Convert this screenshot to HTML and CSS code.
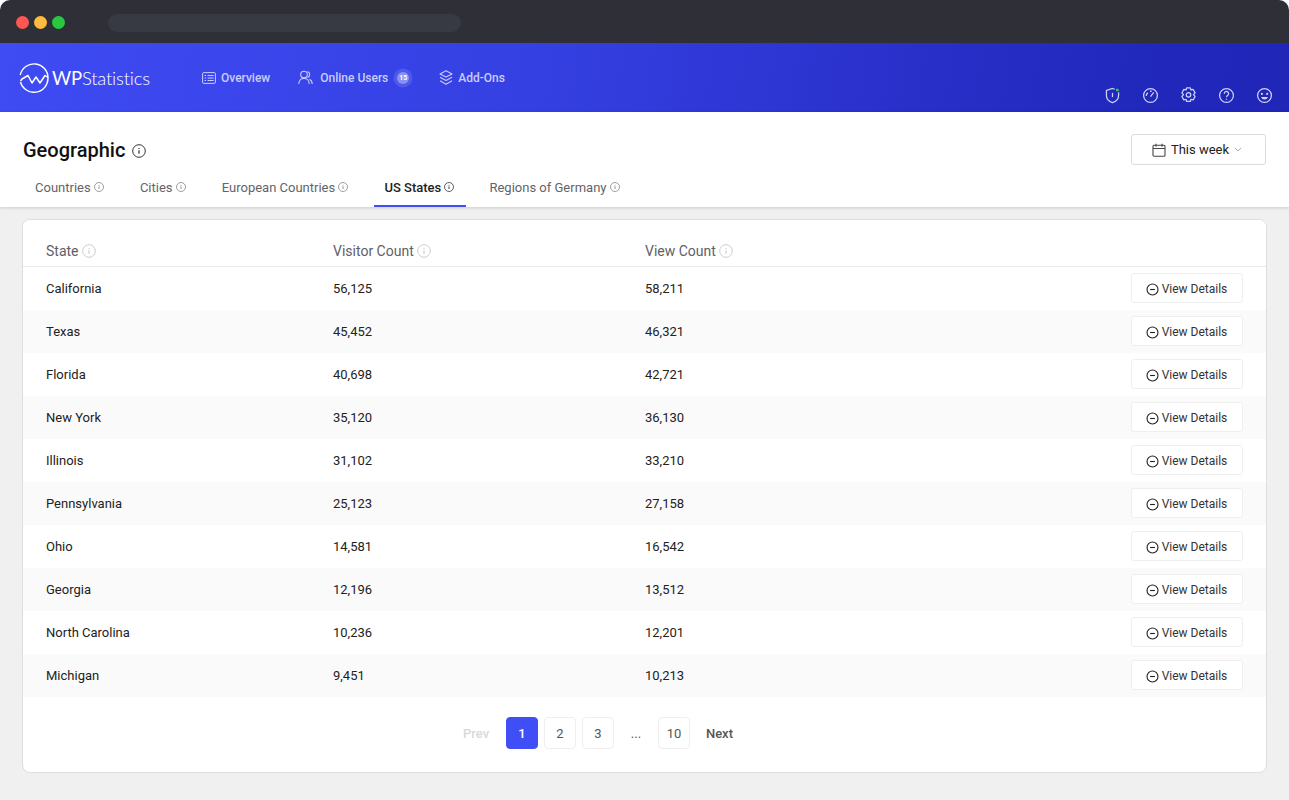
FILE: index.html
```html
<!DOCTYPE html>
<html lang="en">
<head>
<meta charset="utf-8">
<title>WP Statistics - Geographic</title>
<link rel="stylesheet" href="styles.css">
</head>
<body>
<svg class="defs" width="0" height="0" aria-hidden="true">
  <symbol id="info" viewBox="0 0 14 14"><circle cx="7" cy="7" r="6.300" fill="none" stroke="currentColor" stroke-width="1"/><path d="M7 6.200v3.600M7 4v1.100" fill="none" stroke="currentColor" stroke-width="1.200"/></symbol>
  <symbol id="minus" viewBox="0 0 14 14"><circle cx="7" cy="7" r="5.900" fill="none" stroke="currentColor" stroke-width="1.200"/><path d="M4.400 7h5.200" fill="none" stroke="currentColor" stroke-width="1.200"/></symbol>
</svg>
<div class="window">
  <div class="chrome">
    <span class="dot red"></span><span class="dot yellow"></span><span class="dot green"></span>
    <span class="url"></span>
  </div>
  <header class="topbar">
    <div class="logo">
      <svg class="logo-mark" viewBox="0 0 30 30" width="30" height="30"><path d="M1.300 12A14 14 0 0 1 29 15A14 14 0 0 1 1.500 19" fill="none" stroke="#fff" stroke-width="1.400"/><path d="M1.500 18L3 16l6-3.500 4 7.500 4-6 4 6 5-7.500 3 2" fill="none" stroke="#fff" stroke-width="1.500" stroke-linejoin="round"/></svg>
      <span class="logo-text">WP<span class="logo-light">Statistics</span></span>
    </div>
    <nav class="nav">
      <a class="nav-item"><svg viewBox="0 0 14 12" width="14" height="12"><rect x=".6" y=".6" width="12.800" height="10.800" rx="1" fill="none" stroke="currentColor"/><path d="M2.600 3.500h1.500M2.600 6h1.500M2.600 8.500h1.500M5.600 3.500h6M5.600 6h6M5.600 8.500h6" stroke="currentColor" fill="none"/></svg>Overview</a>
      <a class="nav-item"><svg viewBox="0 0 15 15" width="15" height="15"><circle cx="6" cy="4.500" r="3.300" fill="none" stroke="currentColor" stroke-width="1.100"/><path d="M.8 14c0-3.300 2.200-5.600 5.200-5.600S11.200 10.700 11.200 14M9.500 1.400a3.300 3.300 0 0 1 0 6.200M11.500 9.200c1.700.9 2.700 2.700 2.700 4.800" fill="none" stroke="currentColor" stroke-width="1.100"/></svg>Online Users<span class="badge">15</span></a>
      <a class="nav-item"><svg viewBox="0 0 14 15" width="14" height="15"><path d="M7 .8l6 3.100-6 3.100-6-3.100zM1 7.300l6 3.100 6-3.100M1 10.700l6 3.500 6-3.500" fill="none" stroke="currentColor" stroke-width="1.100" stroke-linejoin="round"/></svg>Add-Ons</a>
    </nav>
    <div class="tools">
      <svg viewBox="0 0 16 16" width="17" height="17"><path d="M8 1.400l5.700 1.800v5c0 3.200-2.400 5.500-5.700 6.600-3.300-1.100-5.700-3.400-5.700-6.600v-5z" fill="none" stroke="currentColor" stroke-width="1.200"/><path d="M8 5.500v4" stroke="currentColor" stroke-width="1.200"/><circle cx="12.500" cy="2.800" r="2" fill="#2bc84a" stroke="#2127bb"/></svg>
      <svg viewBox="0 0 16 16" width="17" height="17"><circle cx="8" cy="8" r="6.500" fill="none" stroke="currentColor" stroke-width="1.200"/><path d="M8 9l3-4M4 8.500a4 4 0 0 1 1.500-3M7.500 4h1.500" fill="none" stroke="currentColor" stroke-width="1.200"/></svg>
      <svg viewBox="0 0 16 16" width="17" height="17"><path d="M6.300 .8h3.400l.6 2 2.100-.5 1.800 3.200-1.500 1.700 1.500 1.700-1.800 3.200-2.100-.5-.6 2H6.300l-.6-2-2.100.5-1.800-3.200 1.500-1.700-1.500-1.700 1.800-3.200 2.100.5z" fill="none" stroke="currentColor" stroke-width="1.200" stroke-linejoin="round"/><circle cx="8" cy="7.400" r="2.100" fill="none" stroke="currentColor" stroke-width="1.200"/></svg>
      <svg viewBox="0 0 16 16" width="17" height="17"><circle cx="8" cy="8" r="6.500" fill="none" stroke="currentColor" stroke-width="1.200"/><path d="M6 6.300a2 2 0 1 1 3.200 1.500c-.8.600-1.200 1-1.200 1.800M8 11v1" fill="none" stroke="currentColor" stroke-width="1.200"/></svg>
      <svg viewBox="0 0 16 16" width="17" height="17"><circle cx="8" cy="8" r="6.500" fill="none" stroke="currentColor" stroke-width="1.200"/><circle cx="5.500" cy="6.500" r="1" fill="currentColor"/><circle cx="10.500" cy="6.500" r="1" fill="currentColor"/><path d="M4.800 9.300h6.400a3.300 3.300 0 0 1-6.400 0z" fill="currentColor"/></svg>
    </div>
  </header>
  <section class="titlebar">
    <div class="title-row">
      <h1 class="title">Geographic <svg class="title-info"><use href="#info"/></svg></h1>
      <button class="range">
        <svg viewBox="0 0 14 14" width="14" height="14"><rect x="1" y="2.200" width="12" height="11" rx="1" fill="none" stroke="#444" stroke-width="1.100"/><path d="M1 5.500h12M4 .8v3M10 .8v3" fill="none" stroke="#444" stroke-width="1.100"/></svg>
        This week
        <svg viewBox="0 0 8 5" width="8" height="5"><path d="M.8.800L4 4l3.200-3.200" fill="none" stroke="#aaa"/></svg>
      </button>
    </div>
    <div class="tabs">
      <a class="tab">Countries <svg class="tab-info"><use href="#info"/></svg></a>
      <a class="tab">Cities <svg class="tab-info"><use href="#info"/></svg></a>
      <a class="tab">European Countries <svg class="tab-info"><use href="#info"/></svg></a>
      <a class="tab active">US States <svg class="tab-info"><use href="#info"/></svg></a>
      <a class="tab">Regions of Germany <svg class="tab-info"><use href="#info"/></svg></a>
    </div>
  </section>
  <main class="content">
    <div class="card">
      <div class="row head">
        <span>State <svg class="head-info"><use href="#info"/></svg></span>
        <span>Visitor Count <svg class="head-info"><use href="#info"/></svg></span>
        <span>View Count <svg class="head-info"><use href="#info"/></svg></span>
      </div>
      <div class="row"><span>California</span><span>56,125</span><span>58,211</span><button class="details"><svg class="minus"><use href="#minus"/></svg>View Details</button></div>
      <div class="row"><span>Texas</span><span>45,452</span><span>46,321</span><button class="details"><svg class="minus"><use href="#minus"/></svg>View Details</button></div>
      <div class="row"><span>Florida</span><span>40,698</span><span>42,721</span><button class="details"><svg class="minus"><use href="#minus"/></svg>View Details</button></div>
      <div class="row"><span>New York</span><span>35,120</span><span>36,130</span><button class="details"><svg class="minus"><use href="#minus"/></svg>View Details</button></div>
      <div class="row"><span>Illinois</span><span>31,102</span><span>33,210</span><button class="details"><svg class="minus"><use href="#minus"/></svg>View Details</button></div>
      <div class="row"><span>Pennsylvania</span><span>25,123</span><span>27,158</span><button class="details"><svg class="minus"><use href="#minus"/></svg>View Details</button></div>
      <div class="row"><span>Ohio</span><span>14,581</span><span>16,542</span><button class="details"><svg class="minus"><use href="#minus"/></svg>View Details</button></div>
      <div class="row"><span>Georgia</span><span>12,196</span><span>13,512</span><button class="details"><svg class="minus"><use href="#minus"/></svg>View Details</button></div>
      <div class="row"><span>North Carolina</span><span>10,236</span><span>12,201</span><button class="details"><svg class="minus"><use href="#minus"/></svg>View Details</button></div>
      <div class="row"><span>Michigan</span><span>9,451</span><span>10,213</span><button class="details"><svg class="minus"><use href="#minus"/></svg>View Details</button></div>
      <div class="pager">
        <span class="pg-text off">Prev</span>
        <span class="pg on">1</span>
        <span class="pg">2</span>
        <span class="pg">3</span>
        <span class="pg-dots">...</span>
        <span class="pg">10</span>
        <span class="pg-text next">Next</span>
      </div>
    </div>
  </main>
</div>
</body>
</html>
```

FILE: styles.css
```css
* { box-sizing: border-box; }
html, body { margin: 0; height: 100%; }
body { background: #fff; font-family: Roboto, "Liberation Sans", sans-serif; color: #222; overflow: hidden; }
.defs { position: absolute; }
.window { height: 800px; display: flex; flex-direction: column; }

.chrome { height: 43px; background: #2e2f37; border-radius: 10px 10px 0 0; display: flex; align-items: center; padding: 2px 0 0 16px; flex: none; }
.dot { width: 13px; height: 13px; border-radius: 50%; margin-right: 5px; }
.red { background: #fc5753; }
.yellow { background: #fdbc40; }
.green { background: #2ac840; }
.url { width: 353px; height: 18px; background: #383a43; border-radius: 9px; margin-left: 38px; }

.topbar { height: 69px; flex: none; background: linear-gradient(100deg, #3f4bf3 0%, #3540e2 42%, #2a31cc 68%, #2027ba 90%, #1f26b8 100%); display: flex; color: #fff; position: relative; }
.logo { display: flex; align-items: center; width: 183px; padding-left: 19px; gap: 3px; }
.logo-mark { flex: none; }
.logo-text { font-family: Lato, sans-serif; font-size: 18.500px; font-weight: 400; letter-spacing: -.2px; color: #fff; }
.logo-light { font-weight: 300; }
.nav { display: flex; align-items: center; gap: 28px; padding-left: 19px; }
.nav-item { display: flex; align-items: center; gap: 5px; font-size: 12px; font-weight: 500; color: #c9cdfa; }
.nav-item:nth-child(2) { gap: 7px; }
.badge { width: 12px; height: 12px; border-radius: 50%; background: #8a91f4; box-shadow: 0 0 0 3.500px rgba(124,132,242,.35); color: #fff; font-size: 7px; font-weight: 700; display: flex; align-items: center; justify-content: center; margin: 0 2px 0 2px; }
.tools { margin-left: auto; display: flex; align-items: center; gap: 21px; padding: 35px 16px 0 0; color: #cdd0f8; height: 100%; }

.titlebar { height: 95px; flex: none; background: #fff; box-shadow: 0 1px 3px rgba(0,0,0,.15); padding: 22px 23px 0 23px; position: relative; display: flex; flex-direction: column; }
.title-row { display: flex; justify-content: space-between; align-items: flex-start; height: 37px; }
.title { margin: 3px 0 0; font-size: 20px; font-weight: 500; line-height: 27px; color: #111; display: flex; align-items: center; gap: 7px; }
.title-info { width: 14px; height: 14px; color: #333; }
.range { width: 135px; height: 31px; background: #fff; border: 1px solid #dcdcdf; border-radius: 3px; display: flex; align-items: center; justify-content: center; gap: 5px; font: 400 13px Roboto, sans-serif; color: #222; padding: 0 3px 0 0; }
.tabs { display: flex; gap: 14px; height: 36px; margin-left: 1px; }
.tab { padding: 0 11px 2px; font-size: 13px; font-weight: 400; color: #62646c; display: flex; align-items: center; white-space: pre; height: 36px; border-bottom: 2px solid transparent; }
.tab-info { width: 10px; height: 10px; color: #777; }
.tab.active { color: #222; border-bottom-color: #404ff5; font-weight: 500; margin: 0 -1px 0 1px; padding-left: 10px; padding-right: 12px; }
.tab.active .tab-info { color: #222; }
.tab.active + .tab { padding-left: 10px; padding-right: 12px; }

.content { flex: 1; padding: 12px 22px 27px; min-height: 0; background: #f0f0f0; }
.card { background: #fff; border: 1px solid #dedede; border-radius: 8px; height: 554px; overflow: hidden; display: flex; flex-direction: column; }
.row { display: grid; grid-template-columns: 287px 312px 1fr auto; align-items: center; height: 43px; padding: 0 23px; font-size: 13px; color: #222; flex: none; }
.row:nth-child(odd) { background: #fafafa; }
.row.head { height: 47px; background: #fff; padding-top: 15px; font-size: 14px; color: #5f6067; border-bottom: 1px solid #e9e9e9; }
.head span { display: flex; align-items: center; white-space: pre; }
.head-info { width: 14px; height: 14px; color: #ccc; }
.details { width: 112px; height: 30px; background: #fff; border: 1px solid #efefef; border-radius: 3px; font: 400 12px Roboto, sans-serif; color: #333; display: flex; align-items: center; justify-content: center; gap: 3px; padding: 2px 1px 0 0; margin-bottom: 1px; }
.minus { width: 13px; height: 13px; color: #222; }

.pager { flex: 1; display: flex; align-items: center; justify-content: center; gap: 6px; font-size: 13px; font-weight: 500; color: #555; padding: 0 93px 3px 0; }
.pg { width: 32px; height: 32px; border: 1px solid #eee; border-radius: 4px; display: flex; align-items: center; justify-content: center; font-weight: 400; }
.pg.on { background: #404ff5; border-color: #404ff5; color: #fff; font-weight: 500; }
.pg-text { width: 37px; }
.pg-text.off { color: #d8d8dc; }
.pg-text.next { text-align: right; }
.pg-dots { width: 32px; text-align: center; font-weight: 400; }
```
